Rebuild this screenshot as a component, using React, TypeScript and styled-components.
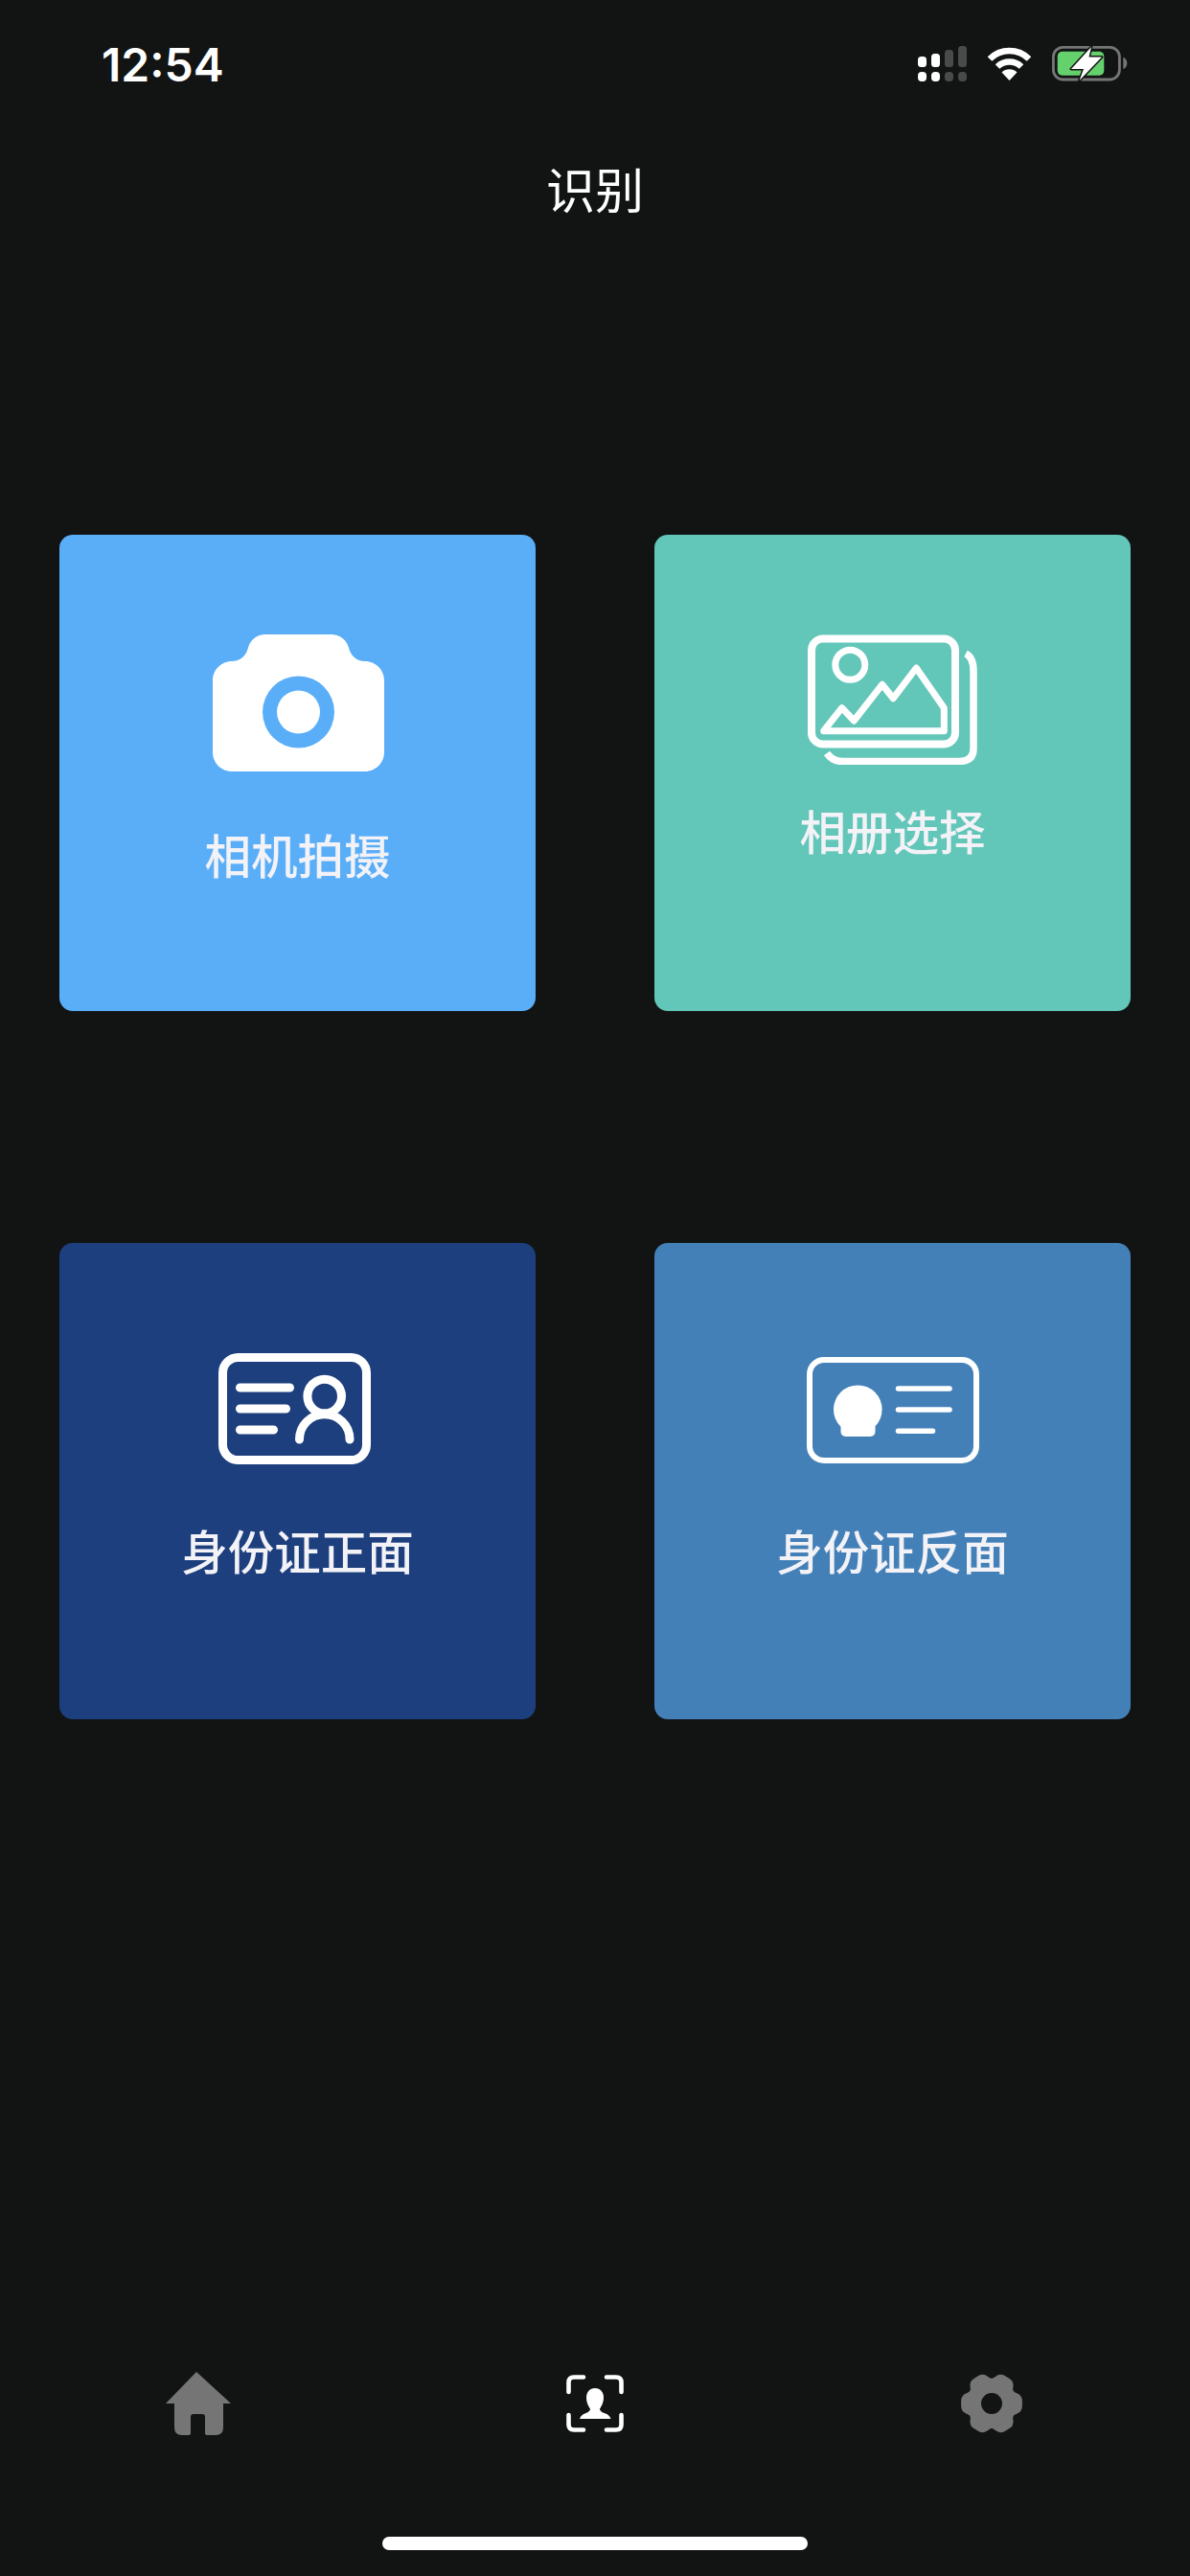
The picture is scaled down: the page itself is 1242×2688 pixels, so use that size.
import React from 'react';
import styled, { createGlobalStyle } from 'styled-components';

const GlobalStyle = createGlobalStyle`
  html, body {
    margin: 0;
    padding: 0;
    background: #121414;
  }
`;

const Page = styled.div`
  width: 1242px;
  height: 2688px;
  display: flex;
  flex-direction: column;
  background: #121414;
  font-family: 'Noto Sans CJK SC', sans-serif;
  overflow: hidden;
`;

const StatusBar = styled.div`
  height: 146px;
  box-sizing: border-box;
  padding: 48px 65px 0 106px;
  display: flex;
  align-items: flex-start;
  justify-content: space-between;
`;

const Time = styled.div`
  font-family: Inter, sans-serif;
  font-size: 48px;
  font-weight: 600;
  line-height: 40px;
  color: #fff;
`;

const StatusIcons = styled.div`
  display: flex;
  align-items: flex-start;
  gap: 21px;
`;

const Title = styled.div`
  height: 100px;
  line-height: 100px;
  text-align: center;
  font-size: 51px;
  font-weight: 400;
  color: #fff;
`;

const Grid = styled.div`
  margin: 312px 62px 0;
  display: grid;
  grid-template-columns: 497px 497px;
  grid-auto-rows: 497px;
  justify-content: space-between;
  row-gap: 242px;
`;

const Card = styled.div<{ $bg: string; $top: number; $gap: number }>`
  background: ${p => p.$bg};
  border-radius: 14px;
  box-sizing: border-box;
  padding-top: ${p => p.$top}px;
  display: flex;
  flex-direction: column;
  align-items: center;
  gap: ${p => p.$gap}px;
`;

const CardLabel = styled.div`
  font-size: 48.5px;
  font-weight: 500;
  line-height: 60px;
  color: #f2f2f7;
`;

const Spacer = styled.div`
  flex: 1;
`;

const TabBar = styled.div`
  height: 100px;
  display: grid;
  grid-template-columns: repeat(3, 414px);
  align-items: center;
  justify-items: center;
`;

const HomeIndicator = styled.div`
  width: 444px;
  height: 14px;
  margin: 89px auto 27px;
  border-radius: 7px;
  background: #fff;
`;

const Svg = styled.svg`
  display: block;
`;

// gear outline: six flat lobes with softened corners
const gearPath = (() => {
  const pts: { x: number; y: number; cut: number }[] = [];
  const polar = (deg: number, r: number, cut: number) => {
    const a = (deg * Math.PI) / 180;
    pts.push({ x: r * Math.cos(a), y: r * Math.sin(a), cut });
  };
  for (let i = 0; i < 6; i++) {
    const t = i * 60;
    polar(t - 15, 33, 6);
    polar(t + 15, 33, 6);
    polar(t + 30, 25, 3.5);
  }
  const toward = (from: { x: number; y: number }, to: { x: number; y: number }, d: number) => {
    const len = Math.hypot(to.x - from.x, to.y - from.y);
    return `${(from.x + ((to.x - from.x) * d) / len).toFixed(2)} ${(from.y + ((to.y - from.y) * d) / len).toFixed(2)}`;
  };
  let d = '';
  pts.forEach((p, i) => {
    const prev = pts[(i + pts.length - 1) % pts.length];
    const next = pts[(i + 1) % pts.length];
    d += `${i === 0 ? 'M' : 'L'}${toward(p, prev, p.cut)}Q${p.x.toFixed(2)} ${p.y.toFixed(2)} ${toward(p, next, p.cut)}`;
  });
  return `${d}ZM0 -11A11 11 0 1 0 0 11A11 11 0 1 0 0 -11Z`;
})();

const SignalIcon = () => (
  <Svg width="51" height="37" viewBox="0 0 51 37">
    <rect x="0" y="11" width="9" height="11" rx="3.5" fill="#fff" />
    <rect x="14" y="8" width="9" height="14" rx="3.5" fill="#fff" />
    <rect x="28" y="4" width="9" height="18" rx="3.5" fill="#4a4a4a" />
    <rect x="42" y="0" width="9" height="22" rx="3.5" fill="#4a4a4a" />
    <rect x="0" y="27" width="9" height="10" rx="4" fill="#fff" />
    <rect x="14" y="27" width="9" height="10" rx="4" fill="#fff" />
    <rect x="28" y="27" width="9" height="10" rx="4" fill="#4a4a4a" />
    <rect x="42" y="27" width="9" height="10" rx="4" fill="#4a4a4a" />
  </Svg>
);

const WifiIcon = () => (
  <Svg width="47" height="36" viewBox="0 0 47 36">
    <path d="M3 13.500A29 29 0 0 1 44 13.500" fill="none" stroke="#fff" strokeWidth="6.500" />
    <path d="M11 21.500A18 18 0 0 1 36 21.500" fill="none" stroke="#fff" strokeWidth="6.500" />
    <path d="M23.500 36L15.500 27.500A11.500 11.500 0 0 1 31.500 27.500Z" fill="#fff" />
  </Svg>
);

const BatteryIcon = () => (
  <Svg width="79" height="37" viewBox="0 0 79 37">
    <rect x="1.400" y="1.400" width="69" height="33.600" rx="10" fill="none" stroke="#757575" strokeWidth="2.800" />
    <path d="M74.300 11.700c2.600 1 4 3.400 4 6.200s-1.400 5.200-4 6.100z" fill="#757575" />
    <rect x="5.700" y="5.700" width="48.600" height="25" rx="5" fill="#65d16c" />
    <path
      d="M41 1L20 24H33L28.500 36L52 11.500H38.500Z"
      fill="#fff"
      stroke="#121414"
      strokeWidth="3"
      paintOrder="stroke"
      strokeLinejoin="round"
    />
  </Svg>
);

const CameraIcon = () => (
  <Svg width="181" height="143" viewBox="-2 0 181 143">
    <path
      fill="#fff"
      fillRule="evenodd"
      d="M20 28C29 28 35 22 37 14C39 6 46 0 55 0H123C133 0 140 6 142 14C144 22 150 28 159 28C170 28 179 37 179 48V123C179 134 170 143 159 143H20C9 143 0 134 0 123V48C0 37 9 28 20 28ZM89.500 43.500A37.500 37.500 0 1 0 89.500 118.500A37.500 37.500 0 1 0 89.500 43.500Z"
    />
    <circle cx="89.500" cy="81" r="22.500" fill="#fff" />
  </Svg>
);

const GalleryIcon = () => (
  <Svg width="177" height="136" viewBox="0 0 177 136" fill="none" stroke="#fff">
    <rect x="4" y="4.500" width="150" height="110" rx="12" strokeWidth="8" />
    <path d="M165 20Q173 24 173 38V119Q173 132.500 158 132.500H36Q26 132.500 20 124" strokeWidth="7.500" />
    <circle cx="44.300" cy="31.700" r="15.500" strokeWidth="7" />
    <path
      d="M16.700 100.700L35.700 76.700L48.300 90L77.700 52.300L89.300 66.700L113.300 35L142.300 76.700V100.700Z"
      strokeWidth="7"
      strokeLinejoin="round"
    />
  </Svg>
);

const IdFrontIcon = () => (
  <Svg width="165" height="116" viewBox="0 0 165 116" fill="none" stroke="#fff" strokeWidth="9" strokeLinecap="round">
    <rect x="4.500" y="4.500" width="150" height="107" rx="16" />
    <path d="M22.500 36H74.500M22.500 58H70.500M22.500 80H57.500" />
    <circle cx="110.700" cy="45" r="17.800" />
    <path d="M84.500 90A26.200 26.200 0 0 1 137 90" />
  </Svg>
);

const IdBackIcon = () => (
  <Svg width="180" height="111" viewBox="0 0 180 111">
    <rect x="3" y="3" width="174" height="105" rx="15" fill="none" stroke="#fff" strokeWidth="6" />
    <circle cx="53.300" cy="54.700" r="25.300" fill="#fff" />
    <rect x="35.500" y="68" width="36" height="15" rx="5" fill="#fff" />
    <path d="M95.500 33H149M95.500 55H149M95.500 77.300H131.500" fill="none" stroke="#fff" strokeWidth="5.500" strokeLinecap="round" />
  </Svg>
);

const HomeIcon = () => (
  <Svg width="68" height="66" viewBox="0 0 68 66">
    <path
      fill="#757575"
      d="M32 0L68 33H60V58Q60 66 52 66H43Q41 66 41 64V47Q41 44 38 44H29Q26 44 26 47V64Q26 66 24 66H17Q9 66 9 58V33H0Z"
    />
  </Svg>
);

const ScanIcon = () => (
  <Svg width="60" height="60" viewBox="0 0 60 60">
    <path
      d="M2.500 18V8Q2.500 2.500 8 2.500H18M42 2.500H52Q57.500 2.500 57.500 8V18M57.500 42V52Q57.500 57.500 52 57.500H42M18 57.500H8Q2.500 57.500 2.500 52V42"
      fill="none"
      stroke="#fff"
      strokeWidth="4.600"
      strokeLinecap="round"
    />
    <path
      fill="#fff"
      d="M30 14C36 14 39 18.500 39 24C39 29 36.500 33.500 35 35.500C35 38 38 39.500 41 40.500C43.500 41.300 45.500 43 46.500 46H14C15 43 17 41.300 19.500 40.500C22 39.500 25 38 25 35.500C23.500 33.500 21 29 21 24C21 18.500 24 14 30 14Z"
    />
  </Svg>
);

const GearIcon = () => (
  <Svg width="64" height="62" viewBox="-32 -31 64 62">
    <path fill="#757575" fillRule="evenodd" d={gearPath} />
  </Svg>
);

const cards = [
  { label: '相机拍摄', bg: '#5aaef8', top: 104, gap: 56, icon: <CameraIcon /> },
  { label: '相册选择', bg: '#62c6b9', top: 104, gap: 38, icon: <GalleryIcon /> },
  { label: '身份证正面', bg: '#1d3f7e', top: 115, gap: 59, icon: <IdFrontIcon /> },
  { label: '身份证反面', bg: '#4480b8', top: 119, gap: 60, icon: <IdBackIcon /> },
];

const App: React.FC = () => {
  return (
    <Page>
      <GlobalStyle />
      <StatusBar>
        <Time>12:54</Time>
        <StatusIcons>
          <SignalIcon />
          <WifiIcon />
          <BatteryIcon />
        </StatusIcons>
      </StatusBar>
      <Title>识别</Title>
      <Grid>
        {cards.map(card => (
          <Card key={card.label} $bg={card.bg} $top={card.top} $gap={card.gap}>
            {card.icon}
            <CardLabel>{card.label}</CardLabel>
          </Card>
        ))}
      </Grid>
      <Spacer />
      <TabBar>
        <HomeIcon />
        <ScanIcon />
        <GearIcon />
      </TabBar>
      <HomeIndicator />
    </Page>
  );
};

export default App;
